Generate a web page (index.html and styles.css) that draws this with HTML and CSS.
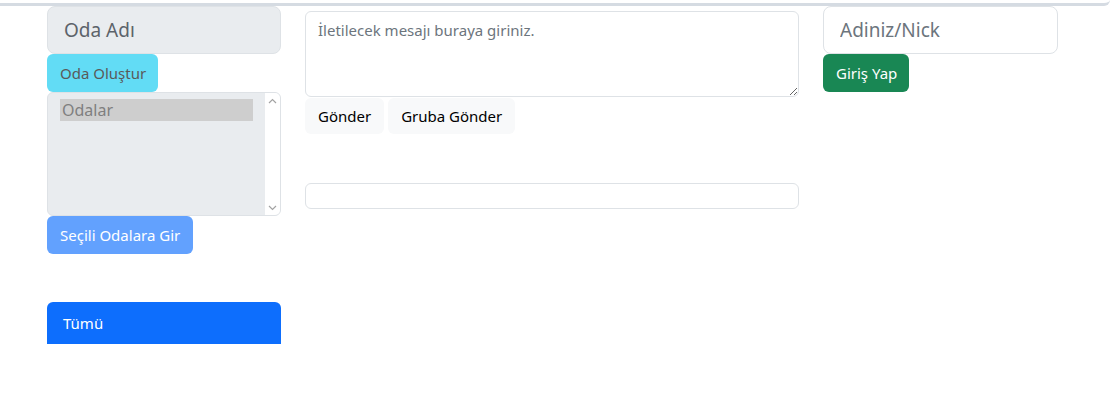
FILE: index.html
```html
<!DOCTYPE html>
<html lang="tr">
<head>
<meta charset="utf-8">
<title>Sohbet</title>
<link rel="stylesheet" href="styles.css">
</head>
<body>
<div class="topbar"></div>
<div class="layout">
  <div class="col">
    <input class="field field-lg field-disabled" type="text" placeholder="Oda Adı" disabled>
    <button class="btn btn-info-off" disabled>Oda Oluştur</button>
    <div class="listbox">
      <div class="listbox-items">
        <div class="option selected">Odalar</div>
      </div>
      <div class="scrollbar">
        <svg class="arrow" width="9" height="6" viewBox="0 0 9 6"><path d="M1 5 L4.5 1.5 L8 5" fill="none" stroke="#a3a3a3" stroke-width="1.2"/></svg>
        <svg class="arrow" width="9" height="6" viewBox="0 0 9 6"><path d="M1 1 L4.5 4.5 L8 1" fill="none" stroke="#a3a3a3" stroke-width="1.2"/></svg>
      </div>
    </div>
    <button class="btn btn-primary-off" disabled>Seçili Odalara Gir</button>
    <div class="list-active">Tümü</div>
  </div>
  <div class="col col-mid">
    <div class="textarea-wrap">
      <textarea class="field textarea" placeholder="İletilecek mesajı buraya giriniz."></textarea>
    </div>
    <div class="btn-row">
      <button class="btn btn-light">Gönder</button>
      <button class="btn btn-light">Gruba Gönder</button>
    </div>
    <input class="field field-sm" type="text">
  </div>
  <div class="col">
    <input class="field field-lg" type="text" placeholder="Adiniz/Nick">
    <button class="btn btn-success">Giriş Yap</button>
  </div>
</div>
</body>
</html>
```
FILE: styles.css
```css
* { box-sizing: border-box; }
body {
  margin: 0;
  font-family: "Noto Sans", "Open Sans", sans-serif;
  font-size: 15px;
  color: #212529;
  background: #fff;
}
.topbar {
  width: 1110px;
  height: 6px;
  border-bottom: 3px solid #d5dbe2;
  border-bottom-right-radius: 10px;
}
.layout {
  display: grid;
  grid-template-columns: 234px 494px 235px;
  column-gap: 24px;
  padding-left: 47px;
}
.col { display: flex; flex-direction: column; align-items: flex-start; }
.field {
  font-family: inherit;
  border: 1px solid #dee2e6;
  background: #fff;
  color: #212529;
  outline: none;
  width: 100%;
}
.field::placeholder { color: #6c757d; opacity: 1; }
.field-lg {
  height: 48px;
  font-size: 19px;
  padding: 0 16px;
  border-radius: 8px;
}
.field-disabled { background: #e9ecef; }
.field-disabled::placeholder { color: #5c636a; }
.btn {
  font-family: inherit;
  font-size: 15px;
  border: 1px solid transparent;
  border-radius: 6px;
  height: 38px;
  padding: 0 12px;
  line-height: 1;
  cursor: pointer;
}
.btn-info-off { background: #62dcf5; color: #5a5a5a; padding: 0 11px 0 12px; }
.btn-primary-off { background: #62a1fe; color: #fff; }
.btn-success { background: #198754; color: #fff; padding: 0 11px 0 12px; }
.btn-light { background: #f8f9fa; color: #000; height: 36px; padding: 0 12px; }
.listbox {
  width: 100%;
  height: 124px;
  border: 1px solid #dee2e6;
  border-radius: 6px;
  background: #e9ecef;
  display: flex;
  overflow: hidden;
}
.listbox-items { flex: 1; padding: 6px 12px; }
.option {
  height: 22px;
  line-height: 22px;
  color: #7f7f7f;
  font-size: 16px;
  padding-left: 2px;
}
.option.selected { background: #cecece; }
.scrollbar {
  width: 15px;
  background: #fff;
  display: flex;
  flex-direction: column;
  justify-content: space-between;
  align-items: center;
  padding: 5px 0 4px;
}
.list-active {
  margin-top: 48px;
  width: 100%;
  height: 42px;
  background: #0d6efd;
  color: #fff;
  border-radius: 6px 6px 0 0;
  padding: 0 16px;
  display: flex;
  align-items: center;
  font-size: 15px;
}
.col-mid { padding-top: 5px; }
.textarea-wrap { width: 100%; }
.textarea {
  display: block;
  height: 86px;
  font-size: 15px;
  padding: 8px 12px;
  border-radius: 6px;
  resize: vertical;
}
.btn-row { display: flex; gap: 4px; margin-top: 1px; }
.field-sm {
  margin-top: 49px;
  height: 26px;
  border-radius: 6px;
}
```
